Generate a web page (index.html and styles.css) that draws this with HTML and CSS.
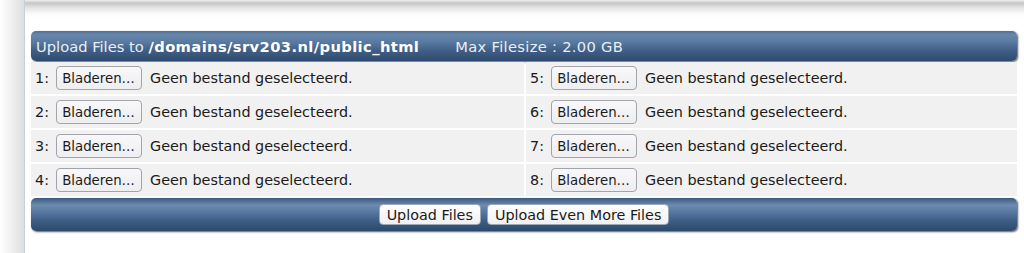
FILE: index.html
```html
<!DOCTYPE html>
<html lang="nl">
<head>
<meta charset="utf-8">
<title>Upload Files</title>
<link rel="stylesheet" href="styles.css">
</head>
<body>
<div class="page">
  <div class="gutter"></div>
  <div class="panel">
    <form class="upload">
      <div class="bar head">
        <span>Upload Files to <b>/domains/srv203.nl/public_html</b></span>
        <span class="max">Max Filesize : 2.00 GB</span>
      </div>
      <div class="grid">
        <div class="cell">1: <span class="btn">Bladeren…</span> Geen bestand geselecteerd.</div>
        <div class="cell">5: <span class="btn">Bladeren…</span> Geen bestand geselecteerd.</div>
        <div class="cell">2: <span class="btn">Bladeren…</span> Geen bestand geselecteerd.</div>
        <div class="cell">6: <span class="btn">Bladeren…</span> Geen bestand geselecteerd.</div>
        <div class="cell">3: <span class="btn">Bladeren…</span> Geen bestand geselecteerd.</div>
        <div class="cell">7: <span class="btn">Bladeren…</span> Geen bestand geselecteerd.</div>
        <div class="cell">4: <span class="btn">Bladeren…</span> Geen bestand geselecteerd.</div>
        <div class="cell">8: <span class="btn">Bladeren…</span> Geen bestand geselecteerd.</div>
      </div>
      <div class="bar foot">
        <span class="sbtn">Upload Files</span>
        <span class="sbtn">Upload Even More Files</span>
      </div>
    </form>
  </div>
</div>
</body>
</html>
```
FILE: styles.css
```css
html, body {
  margin: 0;
  padding: 0;
  background: #fff;
  height: 253px;
  overflow: hidden;
}
body {
  font-family: "DejaVu Sans", Verdana, sans-serif;
  font-size: 14.35px;
  color: #1a1a1a;
}
.page {
  display: flex;
  height: 253px;
}
.gutter {
  width: 24px;
  flex: none;
  background: linear-gradient(to right, #ffffff 0, #f2f2f2 40%, #dedede 100%);
}
.panel {
  width: 990px;
  flex: none;
  border-left: 1px solid #c6d0dc;
  border-right: 1px solid #c8c8c8;
  padding: 31px 3px 0 6px;
  background: linear-gradient(to bottom, #f0f0f0 0, #c6c6c6 3px, #e6e6e6 8px, #fbfbfb 14px, #ffffff 18px) no-repeat;
}
.upload {
  width: 986px;
  margin: 0;
}
.bar {
  border-radius: 5px;
  box-shadow: 1px 1px 2px rgba(0, 0, 0, 0.65);
  color: #e9eef5;
  display: flex;
  align-items: center;
}
.head {
  height: 30px;
  padding-left: 5px;
  font-size: 14.7px;
  background: linear-gradient(to bottom, #4f6f95 0, #6786a9 12%, #5a7ca2 35%, #415f86 65%, #2e4a6e 100%);
  gap: 36px;
}
.head b {
  font-weight: bold;
  color: #fff;
  letter-spacing: 0.4px;
}
.max {
  letter-spacing: 0.3px;
}
.grid {
  display: grid;
  grid-template-columns: 493px 491px;
  column-gap: 2px;
  row-gap: 2px;
  margin-top: 1px;
}
.cell {
  height: 32px;
  background: #f1f1f1;
  display: flex;
  align-items: center;
  padding-left: 4px;
  white-space: pre;
}
.btn {
  display: inline-flex;
  align-items: center;
  justify-content: center;
  height: 22px;
  width: 84px;
  border: 1px solid #a3a3ab;
  border-radius: 4px;
  background: linear-gradient(#f8f8fa, #eeeef0);
  color: #1a1a1a;
  font-size: 13.3px;
  margin: 0 4px 0 2px;
}
.foot {
  height: 33px;
  margin-top: 2px;
  justify-content: center;
  gap: 6px;
  background: linear-gradient(to bottom, #3b5a80 0, #6d8cae 22%, #5475a0 45%, #3e5d84 70%, #2c486c 100%);
}
.sbtn {
  display: inline-flex;
  align-items: center;
  height: 19px;
  padding: 0 7px;
  border: 1px solid #9aa8b8;
  border-radius: 4px;
  background: linear-gradient(#ffffff, #f0f0f2);
  color: #1a1a1a;
}
```
